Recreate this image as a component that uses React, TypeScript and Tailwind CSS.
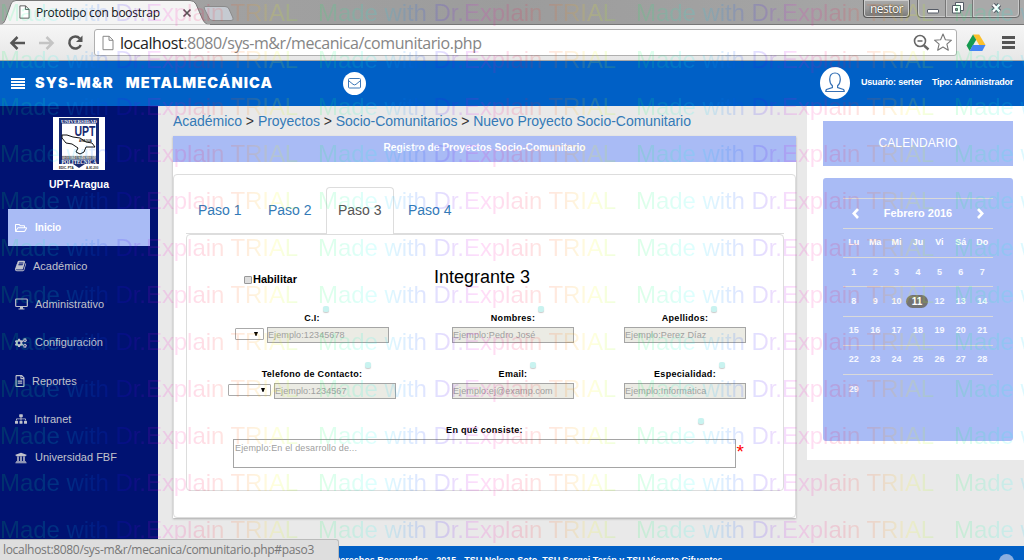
import React from "react";
import { FaRegFolderOpen, FaCogs, FaRegFileAlt, FaSitemap, FaUniversity } from "react-icons/fa";

const BOOK =
  "M1639 478q40 57 18 129l-275 906q-19 64-76.5 107.500t-122.500 43.500h-923q-77 0-148.500-53.500t-99.500-131.500q-24-67-2-127 0-4 3-27t4-37q1-8-3-21.500t-3-19.500q2-11 8-21t16.500-23.500 16.500-23.500q23-38 45-91.500t30-91.500q3-10 .5-30t-.5-28q3-11 17-28t17-23q21-36 42-92t25-90q1-9-2.500-32t.5-28q4-13 22-30.500t22-22.500q19-26 42.500-84.500t27.500-96.500q1-8-3-25.500t-2-26.500q2-8 9-18t18-23 17-21q8-12 16.500-30.500t15-35 16-36 19.500-32 26.500-23.500 36-11.500 47.500 5.500l-1 3q38-9 51-9h761q74 0 114 56t18 130l-274 906q-36 119-71.500 153.500t-128.500 34.500h-869q-27 0-38 15-11 16-1 43 24 70 144 70h923q29 0 56-15.500t35-41.500l300-987q7-22 5-57 38 15 59 43zm-1064 2q-4 13 2 22.500t20 9.500h608q13 0 25.500-9.500t16.500-22.500l21-64q4-13-2-22.500t-20-9.500h-608q-13 0-25.500 9.500t-16.500 22.500zm-83 256q-4 13 2 22.500t20 9.500h608q13 0 25.500-9.500t16.500-22.500l21-64q4-13-2-22.500t-20-9.500h-608q-13 0-25.500 9.500t-16.500 22.500z";

function PageIcon({ className }: { className: string }) {
  return (
    <svg viewBox="0 0 12 15" className={className} fill="#fff" stroke="currentColor">
      <path d="M1 .8h6.200l3.800 3.800v9.600H1z M7 .8v4h4" />
    </svg>
  );
}

function TabStrip() {
  return (
    <div className="relative flex h-[25px] border-b border-[#777] bg-linear-to-r from-[#a5a5a5] via-[#9c9c9c] to-[#aaaaaa]">
      <svg className="absolute left-0 top-0 h-[25px] w-[240px]" viewBox="0 0 240 25">
        <path d="M0 25C4 24 5 21 7 15L11 4Q12 .5 16 .5H190Q194 .5 196 4L202 18Q205 25 210 25Z" fill="#f4f4f4" stroke="#777" />
        <path d="M0 25.500H210" stroke="#f3f3f3" strokeWidth="2" />
        <path d="M205 6.500H225Q228 6.500 229 9L233 18Q234 20.500 231 20.500H213Q210 20.500 209 18L204.500 9Q203.500 6.500 205 6.500Z" fill="#c5cad1" stroke="#8b8b8b" />
        <path d="M183.500 9.500l7 7m0-7l-7 7" stroke="#555" strokeWidth="1.700" />
      </svg>
      <div className="relative flex items-center pl-[19px]">
        <PageIcon className="h-[14px] w-[11px] text-[#555]" />
        <span className="ml-[6px] whitespace-nowrap pt-px font-['Open_Sans',sans-serif] text-[12px] leading-none tracking-[-0.28px] text-[#111]">
          Prototipo con boostrap
        </span>
      </div>
      <div className="relative ml-auto mr-[15px] flex">
        <div className="flex h-[18px] w-[47px] items-center justify-center rounded-b-[4px] border border-t-0 border-[#555] bg-linear-to-b from-[#aaa] via-[#999] to-[#777] font-['Open_Sans',sans-serif] text-[12px] leading-none tracking-[-0.55px] text-white shadow-[inset_0_0_0_1px_#ccc]">
          <span className="[text-shadow:0_0_2px_#000]">nestor</span>
        </div>
        <svg className="-mr-[12px] ml-[7px] h-[19px] w-[104px]" viewBox="0 0 104 19" fill="none">
          <path d="M.5 0V14Q.5 17.500 4 17.500H99Q102.500 17.500 102.500 14V0" fill="#a9a9a9" stroke="#6c6c6c" />
          <path d="M1.500 0V13Q1.500 16.500 5 16.500H98Q101.500 16.500 101.500 13V0M29.500 0V16M56.500 0V16" stroke="#c9c9c9" />
          <path d="M28.500 0V17M55.500 0V17" stroke="#777" />
          <rect x="10.500" y="9.500" width="11" height="3.500" rx=".5" fill="#fff" stroke="#555b66" />
          <path d="M38.500 2.500H46.500V10.500H38.500Z" fill="#fff" stroke="#555b66" />
          <path d="M35.500 5.500H43.500V13H35.500Z" fill="#fff" stroke="#555b66" />
          <path d="M38.500 8.500h2v2h-2z" fill="#999" stroke="#555b66" />
          <path d="M76 4.500l6.500 7m0-7l-6.500 7" stroke="#555b66" strokeWidth="4.600" />
          <path d="M76 4.500l6.500 7m0-7l-6.500 7" stroke="#fff" strokeWidth="2.400" />
        </svg>
      </div>
    </div>
  );
}

function Toolbar() {
  return (
    <div className="flex h-9 items-center border-b border-[#a8a8a8] bg-linear-to-b from-[#f6f6f6] to-[#e7e7e7]">
      <svg className="h-9 w-[94px] shrink-0" viewBox="0 0 94 36" fill="none" strokeWidth="2.500">
        <path d="M25 18H11.500M17.500 12l-6 6 6 6" stroke="#555" />
        <path d="M39 18H52.500M46.500 12l6 6-6 6" stroke="#c4c4c4" />
        <path d="M79.800 13.500A6 6 0 1 0 80.800 20" stroke="#555" />
        <path d="M82.500 10.500V17H76Z" fill="#555" />
      </svg>
      <div className="flex h-[27px] w-[863px] items-center rounded-[3px] border border-[#b0b0b0] bg-white pl-[7px]">
        <PageIcon className="h-4 w-[12px] shrink-0 text-[#888]" />
        <span className="ml-[6px] whitespace-nowrap font-['Open_Sans',sans-serif] text-[16px] leading-none tracking-[-0.43px] text-[#858585]">
          <span className="text-[#222]">localhost</span>:8080/sys-m&amp;r/mecanica/comunitario.php
        </span>
        <svg className="ml-auto mr-[2px] h-[25px] w-[44px]" viewBox="0 0 44 25" fill="none">
          <circle cx="10" cy="11" r="5.500" stroke="#666" strokeWidth="1.600" />
          <path d="M7.500 11h5" stroke="#666" strokeWidth="1.500" />
          <path d="M14 15.500l4.500 4" stroke="#666" strokeWidth="2.400" />
          <path d="M33 4l2.400 5.700 6.100.5-4.600 4 1.400 6-5.300-3.200-5.300 3.200 1.400-6-4.600-4 6.100-.5z" stroke="#777" strokeLinejoin="round" strokeWidth="1.100" />
        </svg>
      </div>
      <svg className="ml-[9px] h-[18px] w-[20px]" viewBox="0 0 20 18">
        <path d="M7 .5h6.200l6.300 10.500h-6.300z" fill="#fbc02d" />
        <path d="M7 .5l3.200 5.200L3.700 17 .5 11.500z" fill="#159a50" />
        <path d="M6.800 11h12.700l-3.200 6H3.700z" fill="#4285f4" />
      </svg>
      <div className="ml-[16px] flex w-[13px] flex-col gap-[2px]">
        <i className="h-[3px] bg-[#555]" />
        <i className="h-[3px] bg-[#555]" />
        <i className="h-[3px] bg-[#555]" />
      </div>
    </div>
  );
}

function Header() {
  return (
    <header className="flex h-[45px] items-center bg-[#0060c6] text-white">
      <div className="ml-[11px] flex w-[14px] flex-col gap-px">
        <i className="h-[2px] bg-white" />
        <i className="h-[2px] bg-white" />
        <i className="h-[2px] bg-white" />
        <i className="h-[2px] bg-white" />
      </div>
      <h1 className="ml-[10px] flex w-[308px] gap-[12px] whitespace-nowrap font-['Inter','Liberation_Sans',sans-serif] text-[14.5px] font-black leading-none tracking-[1.1px]">
        <span>SYS-M&amp;R</span>
        <span>METALMECÁNICA</span>
      </h1>
      <div className="flex size-[23px] items-center justify-center rounded-full bg-white">
        <svg className="h-[11px] w-[13px]" viewBox="0 0 13 11" fill="none" stroke="#3c78b8">
          <rect x=".5" y=".5" width="12" height="9.500" rx="1" />
          <path d="M1 3l4 3.300q1.500 1.200 3 0L12 3" />
        </svg>
      </div>
      <div className="-mt-[2px] ml-auto flex h-8 w-[30px] items-center justify-center rounded-[50%] bg-white">
        <svg className="h-[21px] w-[20px]" viewBox="0 0 20 21" fill="none" stroke="#3570b5" strokeWidth="1.200">
          <path d="M10 1C6.500 1 4.700 3.500 4.700 7.200c0 2.600 1 5.200 2.700 6.600v1.700L1.500 17.500Q.8 18.200 .8 19.500H19.200Q19.200 18.200 18.500 17.500L12.600 15.500v-1.700c1.700-1.400 2.700-4 2.700-6.600C15.300 3.500 13.500 1 10 1z" />
        </svg>
      </div>
      <span className="-mt-[2px] ml-[11px] w-[71px] whitespace-nowrap text-[9px] font-bold leading-none tracking-[-0.2px]">Usuario: serter</span>
      <span className="-mt-[2px] w-[92px] whitespace-nowrap text-[9px] font-bold leading-none tracking-[-0.24px]">Tipo: Administrador</span>
    </header>
  );
}

function UptLogo() {
  return (
    <svg className="h-[53px] w-[52px]" viewBox="0 0 52 53">
      <path d="M0 0h52v53H0z" fill="#fff" />
      <path d="M6 1h40v46l-14 0-6 4-6-4-14 0z" fill="#182a70" />
      <path d="M9 6.500h34V39H9z" fill="#fff" />
      <path d="M9 38.500h34v4H9z" fill="#e8e8e8" />
      <path d="M9 18h5l6 2 7 1 6 4 6 1 3 4-5 0-4 0-2 5-4 2-4-2 2-4-6-4-6-1-4-5z" fill="#fff" stroke="#111" />
      <g fontFamily="Liberation Serif, serif" fontWeight="bold" textAnchor="middle">
        <text x="26" y="5.600" fontSize="5" fill="#fff" textLength="36" lengthAdjust="spacingAndGlyphs">UNIVERSIDAD</text>
        <text x="26" y="42" fontSize="4" fill="#111" textLength="34" lengthAdjust="spacingAndGlyphs">FEDERICO BRITO FIGUEROA</text>
        <text x="26" y="47.300" fontSize="5.500" fill="#fff" textLength="35" lengthAdjust="spacingAndGlyphs">POLITECNICA</text>
      </g>
      <g fontFamily="Liberation Sans, sans-serif" fontWeight="bold">
        <text x="21.500" y="19" fontSize="15" fill="#182a70" textLength="21" lengthAdjust="spacingAndGlyphs">UPT</text>
        <text x="26" y="24.500" fontSize="4" fill="#111" textLength="13" lengthAdjust="spacingAndGlyphs">ARAGUA</text>
        <text x="6" y="52" fontSize="3" fill="#222">EDIC. PTA</text>
        <text x="33" y="52" fontSize="3" fill="#222">A-81.200</text>
      </g>
    </svg>
  );
}

function BookIcon() {
  return (
    <svg viewBox="0 0 1792 1792" className="size-[12px]" fill="currentColor">
      <path d={BOOK} />
    </svg>
  );
}

function DesktopIcon() {
  return (
    <svg viewBox="0 0 13 12" className="h-[12px] w-[13px]" fill="none" stroke="currentColor">
      <rect x=".7" y="1" width="11.600" height="7.500" rx=".8" strokeWidth="1.200" />
      <path d="M5 9h3v1.500h1.500v1h-6v-1H5z" fill="currentColor" stroke="none" />
    </svg>
  );
}

const menu = [
  { label: "Académico", icon: <BookIcon />, gap: "pl-[33px]" },
  { label: "Administrativo", icon: <DesktopIcon />, gap: "pl-[35px]" },
  { label: "Configuración", icon: <FaCogs className="size-[12px]" />, gap: "pl-[35px]" },
  { label: "Reportes", icon: <FaRegFileAlt className="h-[12px] w-[10px]" />, gap: "pl-[32px]" },
  { label: "Intranet", icon: <FaSitemap className="size-[12px]" />, gap: "pl-[34px]" },
  { label: "Universidad FBF", icon: <FaUniversity className="size-[12px]" />, gap: "pl-[35px]" },
];

function Sidebar() {
  return (
    <aside className="flex w-[158px] shrink-0 flex-col items-center bg-[#001272] pt-[11px] text-[#c0c2cc]">
      <UptLogo />
      <div className="mt-[8px] h-[31px] text-[10.5px] font-bold leading-[12px] text-white">UPT-Aragua</div>
      <div className="flex h-[37px] w-[142px] items-center bg-[#a9bbf5] pl-[7px] text-[10px] font-bold text-white">
        <FaRegFolderOpen className="mr-[8px] size-[12px]" />
        Inicio
      </div>
      <nav className="w-full pt-px">
        {menu.map((m) => (
          <div key={m.label} className="relative flex h-[38.300px] items-center">
            <span className="absolute left-[15px]">{m.icon}</span>
            <span className={m.gap + " whitespace-nowrap text-[11px] leading-none"}>{m.label}</span>
          </div>
        ))}
      </nav>
    </aside>
  );
}

function Label({ children }: { children: React.ReactNode }) {
  return (
    <div className="flex h-[21px] justify-center">
      <span className="relative whitespace-nowrap pt-[7px] text-[9px] font-bold leading-[10px] tracking-[0.3px] text-black">
        {children}
        <i className="absolute -right-[9px] top-0 size-[6px] rounded-[2px] bg-[#c9f3f0] shadow-[0_1px_1px_#ccc]" />
      </span>
    </div>
  );
}

function Input({ text }: { text: string }) {
  return (
    <div className="flex h-[16px] w-[122px] shrink-0 items-center whitespace-nowrap border border-[#a5a5a5] bg-[#ebebe4] text-[9px] leading-none tracking-[0.1px] text-[#a0a0a0]">
      {text}
    </div>
  );
}

function Select({ wide }: { wide?: boolean }) {
  return (
    <div className={(wide ? "w-[43px]" : "w-[29px]") + " mt-px flex h-[12px] shrink-0 items-center justify-end rounded-[1px] border border-[#aaa] bg-white pr-[5px]"}>
      <svg viewBox="0 0 4 4" className="size-[4px]">
        <path d="M0 0h4L2.400 4h-.8z" />
      </svg>
    </div>
  );
}

const tabs = ["Paso 1", "Paso 2", "Paso 3", "Paso 4"];

function FormPanel() {
  return (
    <section className="h-[382px] w-[623px] bg-white shadow-[0_1px_2px_#aaa]">
      <div className="h-[26px] bg-[#a9bbf5] pt-[5px] text-center text-[10.2px] font-bold leading-[13px] text-white">
        Registro de Proyectos Socio-Comunitario
      </div>
      <div className="mt-[12px] h-[344px] rounded-[4px] border border-[#ddd] pl-[12px] pr-[11px] pt-[12px]">
        <div className="flex h-[47px] border-b border-[#ddd] text-[14px] text-[#337ab7]">
          {tabs.map((t) => (
            <div
              key={t}
              className={
                (t === "Paso 3"
                  ? "rounded-t-[4px] border border-b-0 border-[#ddd] bg-white text-[#555]"
                  : "border border-transparent") +
                " -mb-px mr-[2px] flex w-[68px] items-center whitespace-nowrap pb-[2px] pl-[11px] leading-none"
              }
            >
              {t}
            </div>
          ))}
        </div>
        <div className="h-[257px] rounded-[4px] border border-[#ddd]">
          <div className="flex h-[71px] items-start">
            <div className="ml-[57px] mt-[39px] flex w-[190px] items-center text-[11px] font-bold leading-[11px] text-black">
              <i className="mr-px size-[8px] rounded-[1px] border border-[#999] bg-[#ddd]" />
              Habilitar
            </div>
            <h2 className="mt-[32px] text-[18px] leading-[20px] text-black">Integrante 3</h2>
          </div>
          <div className="flex h-[56px]">
            <div className="ml-[41px] w-[168px]">
              <Label>C.I:</Label>
              <div className="ml-[7px] flex items-start gap-[3px]">
                <Select />
                <Input text="Ejemplo:12345678" />
              </div>
            </div>
            <div className="ml-[56px] w-[122px]">
              <Label>Nombres:</Label>
              <Input text="Ejemplo:Pedro José" />
            </div>
            <div className="ml-[50px] w-[122px]">
              <Label>Apellidos:</Label>
              <Input text="Ejemplo:Perez Díaz" />
            </div>
          </div>
          <div className="flex h-[56px]">
            <div className="ml-[41px] w-[168px]">
              <Label>Telefono de Contacto:</Label>
              <div className="flex items-start gap-[3px]">
                <Select wide />
                <Input text="Ejemplo:1234567" />
              </div>
            </div>
            <div className="ml-[56px] w-[122px]">
              <Label>Email:</Label>
              <Input text="Ejemplo:ej@examp.com" />
            </div>
            <div className="ml-[50px] w-[122px]">
              <Label>Especialidad:</Label>
              <Input text="Ejemplo:Informática" />
            </div>
          </div>
          <div className="relative ml-[46px] w-[503px]">
            <div className="h-[21px] pt-[7px] text-center text-[9px] font-bold leading-[10px] tracking-[0.3px] text-black">En qué consiste:</div>
            <i className="absolute left-[465px] top-0 size-[6px] rounded-[2px] bg-[#c9f3f0] shadow-[0_1px_1px_#ccc]" />
            <div className="h-[29px] border border-[#a5a5a5] bg-white pl-px pt-[3px] text-[9px] leading-[11px] tracking-[0.15px] text-[#a0a0a0]">
              Ejemplo:En el desarrollo de...
            </div>
            <span className="absolute -right-[8px] top-[24px] text-[19px] leading-[20px] text-[#ff0000]">*</span>
          </div>
        </div>
      </div>
    </section>
  );
}

const weeks = [
  [1, 2, 3, 4, 5, 6, 7],
  [8, 9, 10, 11, 12, 13, 14],
  [15, 16, 17, 18, 19, 20, 21],
  [22, 23, 24, 25, 26, 27, 28],
  [29],
];

function Calendar() {
  return (
    <aside className="h-[354px] w-[217px] bg-white pl-[16px] pt-[15px] text-white">
      <div className="flex h-[45px] w-[190px] items-center justify-center bg-[#a9bbf5] pb-[2px] text-[12px] tracking-[0.1px]">CALENDARIO</div>
      <div className="mt-[12px] h-[263px] w-[190px] rounded-[3px] bg-[#a9bbf5] px-[20px] pt-[20px]">
        <div className="flex h-[30px] items-center justify-between border-t border-[#d9d9d9] px-[9px] text-[11px] font-bold">
          <svg viewBox="0 0 7 11" className="h-[11px] w-[7px]" fill="none" stroke="#fff" strokeWidth="2.600">
            <path d="M6 1L1.800 5.500 6 10" />
          </svg>
          <span className="whitespace-nowrap">Febrero 2016</span>
          <svg viewBox="0 0 7 11" className="h-[11px] w-[7px]" fill="none" stroke="#fff" strokeWidth="2.600">
            <path d="M1 1l4.200 4.500L1 10" />
          </svg>
        </div>
        <div className="grid h-[29.200px] grid-cols-7 items-center border-t border-[#d9d9d9] text-center text-[9px] font-bold">
          {["Lu", "Ma", "Mi", "Ju", "Vi", "Sá", "Do"].map((d) => (
            <span key={d}>{d}</span>
          ))}
        </div>
        {weeks.map((w) => (
          <div key={w[0]} className="grid h-[29.200px] grid-cols-7 items-center border-t border-[#d9d9d9] text-center text-[9px] font-bold leading-[13px]">
            {w.map((d) => (
              <span key={d} className={d === 11 ? "-ml-px mr-px rounded-full bg-[#737373] text-[10px]" : "text-white/90"}>
                {d}
              </span>
            ))}
          </div>
        ))}
      </div>
    </aside>
  );
}

const columns = [0, 1, 2, 3];
const rows = [0, 1, 2, 3, 4, 5, 6, 7, 8, 9, 10, 11];

function Watermark() {
  return (
    <div className="pointer-events-none absolute inset-0 overflow-hidden opacity-[0.13]">
      {rows.map((r) => (
        <div key={r} className="flex h-[47px] w-[1300px]">
          {columns.map((c) => (
            <div key={c} className="w-[318px] shrink-0">
              <span className="inline-block whitespace-nowrap bg-[linear-gradient(90deg,#00ff50_0%,#00ffff_20%,#0060ff_32%,#3000ff_42%,#ff00e0_54%,#ff0040_68%,#ff7000_82%,#ffff00_92%,#90ff00_100%)] bg-clip-text text-[24px] leading-[26px] tracking-[-0.06px] text-transparent">
                Made with Dr.Explain TRIAL
              </span>
            </div>
          ))}
        </div>
      ))}
    </div>
  );
}

export default function App() {
  return (
    <div className="relative h-[560px] w-[1024px] overflow-hidden bg-[#e9e9e9] font-['Liberation_Sans',Arial,sans-serif]">
      <TabStrip />
      <Toolbar />
      <Header />
      <div className="flex h-[440px]">
        <Sidebar />
        <main className="w-[649px] shrink-0 pl-[15px]">
          <div className="h-[30px] whitespace-nowrap pt-[7px] text-[14px] leading-[16px] tracking-[-0.03px] text-[#337ab7]">
            Académico <span className="text-[#333]">&gt;</span> Proyectos <span className="text-[#333]">&gt;</span> Socio-Comunitarios{" "}
            <span className="text-[#333]">&gt;</span> Nuevo Proyecto Socio-Comunitario
          </div>
          <FormPanel />
        </main>
        <Calendar />
      </div>
      <footer className="relative flex h-[30px] justify-center overflow-hidden bg-[#0060c6] pr-[12px] pt-[9px] text-[9px] font-bold leading-[11px] text-white">
        <span className="whitespace-nowrap">Todos los Derechos Reservados - 2015 - TSU Nelson Soto, TSU Sergei Terán y TSU Vicente Cifuentes</span>
        <i className="absolute right-[10px] top-[8px] size-[15px] rounded-full bg-[#8aaee0]" />
      </footer>
      <Watermark />
      <div className="absolute bottom-0 left-0 h-[21px] w-[339px] whitespace-nowrap rounded-tr-[3px] border-r border-t border-[#bbb] bg-[#dedede] pl-[3px] pt-[3px] font-['Open_Sans',sans-serif] text-[12px] leading-[14px] tracking-[-0.32px] text-[#777]">
        localhost:8080/sys-m&amp;r/mecanica/comunitario.php#paso3
      </div>
    </div>
  );
}
